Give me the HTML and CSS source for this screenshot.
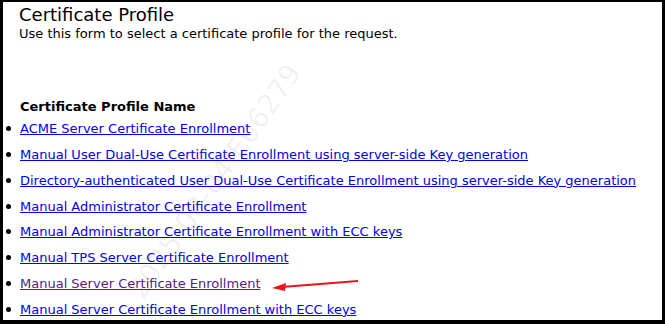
FILE: index.html
```html
<!DOCTYPE html>
<html lang="en">
<head>
  <meta charset="UTF-8">
  <title>Certificate Profile</title>
  <link rel="stylesheet" href="styles.css">
</head>
<body>
<div class="frame">
  <h1>Certificate Profile</h1>
  <p class="intro">Use this form to select a certificate profile for the request.</p>

  <h4>Certificate Profile Name</h4>
  <ul class="profiles">
    <li><a href="#acme">ACME Server Certificate Enrollment</a></li>
    <li><a href="#dualuse">Manual User Dual-Use Certificate Enrollment using server-side Key generation</a></li>
    <li><a href="#dirdualuse">Directory-authenticated User Dual-Use Certificate Enrollment using server-side Key generation</a></li>
    <li><a href="#admin">Manual Administrator Certificate Enrollment</a></li>
    <li><a href="#adminecc">Manual Administrator Certificate Enrollment with ECC keys</a></li>
    <li><a href="#tps">Manual TPS Server Certificate Enrollment</a></li>
    <li><a href="#server" class="visited">Manual Server Certificate Enrollment</a></li>
    <li><a href="#serverecc">Manual Server Certificate Enrollment with ECC keys</a></li>
  </ul>

  <div class="watermark">2025-08-04 E06279</div>

  <svg class="arrow" width="100" height="20" viewBox="0 0 100 20">
    <line x1="12" y1="11" x2="88" y2="5" stroke="#e8161b" stroke-width="2"/>
    <polygon points="2,12 16,7 15,15" fill="#e8161b"/>
  </svg>
</div>
</body>
</html>
```

FILE: styles.css
```css
body {
  margin: 0;
  font-family: "DejaVu Sans", Verdana, sans-serif;
  background: #fff;
  color: #000;
}

.frame {
  position: relative;
  box-sizing: border-box;
  width: 665px;
  height: 324px;
  border-top: 2px solid #000;
  border-left: 3px solid #000;
  border-right: 3px solid #000;
  border-bottom: 4px solid #000;
  padding: 0 0 0 17px;
  overflow: hidden;
}

h1 {
  font-size: 18px;
  font-weight: normal;
  margin: 2px 0 0 -1px;
  line-height: 22px;
}

.intro {
  font-size: 13px;
  margin: 0 0 0 -1px;
  line-height: 16px;
}

h4 {
  font-size: 13px;
  font-weight: bold;
  margin: 56px 0 0 0;
  line-height: 18px;
}

.profiles {
  margin: 0;
  padding: 0;
  list-style: none;
  font-size: 13px;
}

.profiles li {
  position: relative;
  line-height: 25.85px;
}

.profiles li::before {
  content: "";
  position: absolute;
  left: -14px;
  top: 10px;
  width: 5px;
  height: 5px;
  border-radius: 50%;
  background: #000;
}

.profiles a {
  color: #0000ee;
}

.profiles a.visited {
  color: #551a8b;
}

.watermark {
  position: absolute;
  left: 120px;
  top: 285px;
  font-size: 28px;
  line-height: 30px;
  color: rgba(0, 0, 0, 0.06);
  transform: rotate(-55deg);
  transform-origin: left top;
  white-space: nowrap;
  pointer-events: none;
}

.arrow {
  position: absolute;
  left: 267px;
  top: 274px;
}
```
